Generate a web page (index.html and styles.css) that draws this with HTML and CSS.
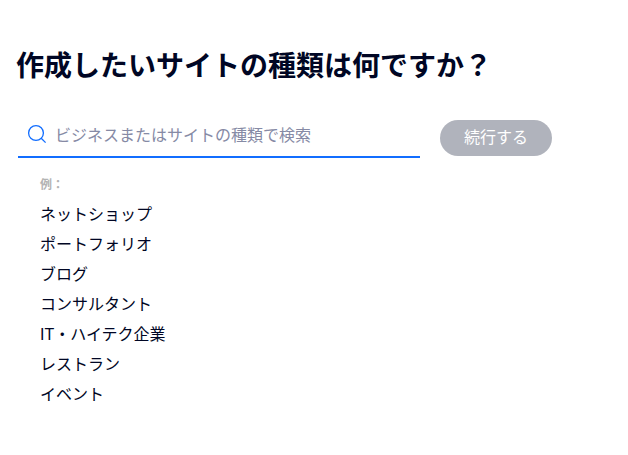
FILE: index.html
```html
<!DOCTYPE html>
<html lang="ja">
<head>
    <meta charset="UTF-8">
    <title>サイトの種類</title>
    <link rel="stylesheet" href="styles.css">
</head>
<body>
<div class="wrap">
    <h1 class="title">作成したいサイトの種類は何ですか？</h1>
    <div class="search">
        <div class="field">
            <svg class="icon" width="20" height="20" viewBox="0 0 20 20" fill="none" stroke="#116dff" stroke-width="1.3">
                <circle cx="9" cy="9" r="7.4"/>
                <path d="M14.2 14.2l4.4 4.4"/>
            </svg>
            <span class="holder">ビジネスまたはサイトの種類で検索</span>
        </div>
        <a class="next" href="javascript:;">続行する</a>
    </div>
    <div class="label">例：</div>
    <ul class="list">
        <li>ネットショップ</li>
        <li>ポートフォリオ</li>
        <li>ブログ</li>
        <li>コンサルタント</li>
        <li>IT・ハイテク企業</li>
        <li>レストラン</li>
        <li>イベント</li>
    </ul>
</div>
</body>
</html>
```
FILE: styles.css
```css
*{margin:0;padding:0;}
body{background:#fff;font-family:"Liberation Sans","Noto Sans CJK JP",sans-serif;color:#000624;}
ul,li{list-style:none;}
a{text-decoration:none;}
.wrap{padding:48px 0 0 16px;}
.title{font-size:28px;line-height:38px;font-weight:700;}
.search{display:flex;align-items:flex-start;margin-top:25px;}
.field{display:flex;align-items:center;width:402px;height:45px;margin-left:2px;border-bottom:2px solid #116dff;}
.icon{margin:0 8px 0 9px;}
.holder{font-size:16px;color:#868aa5;}
.next{width:112px;height:36px;line-height:35px;margin:9px 0 0 20px;border-radius:18px;background:#b0b3bc;color:#fff;font-size:16px;text-align:center;}
.label{margin:18px 0 0 24px;font-size:12px;line-height:18px;font-weight:700;color:#b3b3b3;}
.list{margin:6px 0 0 24px;}
.list li{font-size:16px;line-height:30px;}
```
